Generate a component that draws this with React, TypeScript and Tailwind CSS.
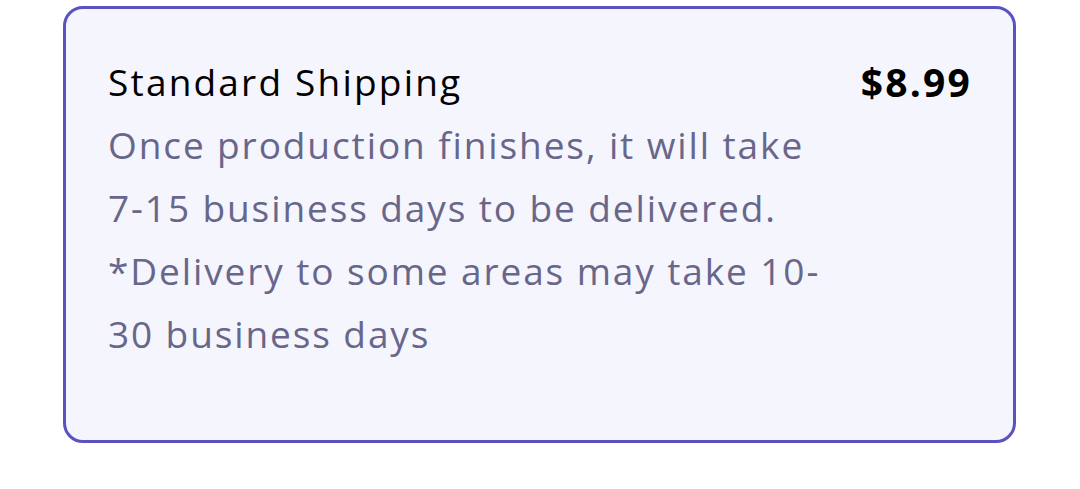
export default function App() {
  return (
    <div className="w-[1080px] h-[489px] bg-white pt-[6px] pl-[63px]" style={{ fontFamily: "'Open Sans', Lato, sans-serif" }}>
      <div className="w-[953px] h-[437px] rounded-[20px] border-[3px] border-[#5b52c2] bg-[#f5f5fd] pl-[42px] pr-[41px] pt-[41px]">
        <div className="flex items-start justify-between">
          <div className="flex flex-col">
            <h3 className="text-[37px] leading-[63px] tracking-[2.2px] text-black">Standard Shipping</h3>
            <p className="text-[37px] leading-[63px] tracking-[1.9px] text-[#68668a]">
              <span className="block">Once production finishes, it will take</span>
              <span className="block">7-15 business days to be delivered.</span>
              <span className="block">*Delivery to some areas may take 10-</span>
              <span className="block">30 business days</span>
            </p>
          </div>
          <span className="text-[39px] leading-[63px] tracking-[2.2px] font-bold text-black">$8.99</span>
        </div>
      </div>
    </div>
  );
}
